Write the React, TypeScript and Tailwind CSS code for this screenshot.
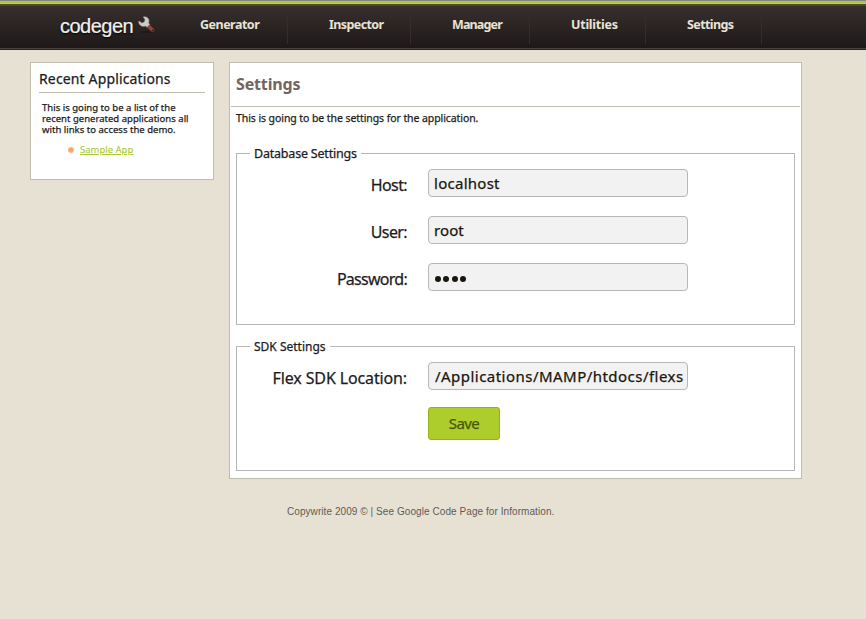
import type { ReactNode } from "react";

const navItems = [
  { label: "Generator", box: "w-[118px] pl-[30px]", text: "tracking-[-0.5px]" },
  { label: "Inspector", box: "w-[123px] pl-[41px]", text: "tracking-[-0.6px]" },
  { label: "Manager", box: "w-[119px] pl-[41px]", text: "tracking-[-0.85px]" },
  { label: "Utilities", box: "w-[116px] pl-[41px]", text: "tracking-[-0.25px]" },
  { label: "Settings", box: "w-[116px] pl-[41px]", text: "tracking-[-0.6px]" },
];

function Wrench() {
  return (
    <svg width="18" height="18" viewBox="0 0 18 18" className="mt-[10px] ml-[2px] shrink-0">
      <ellipse cx="8" cy="16" rx="6" ry="0.7" fill="#161211" opacity="0.7" />
      <path d="M10 9.8 L14.4 14" stroke="#6a3229" strokeWidth="4.4" strokeLinecap="round" />
      <path d="M10 9.6 L14.2 13.6" stroke="#97493b" strokeWidth="2.6" strokeLinecap="round" />
      <circle cx="14.6" cy="14.2" r="0.7" fill="#2a1614" />
      <path
        d="M5.2 0.9 C8.2 0.1 11 2 11 5 C11 5.8 10.8 6.4 10.5 7 L11.8 8.3 L8.8 11.1 L7.4 10 C4.4 11.3 1 9.4 0.6 6 L1 5 L3.8 7.1 L6.4 6.1 L7 3.5 Z"
        fill="#cbcbc9"
        stroke="#9d9b99"
        strokeWidth="0.5"
      />
    </svg>
  );
}

function Header() {
  return (
    <header className="h-[50px] border-t border-[#85858a] bg-[#272020]">
      <div className="h-[2px] bg-[#a9ca2c]" />
      <div className="h-px bg-[#b6d84b]" />
      <div className="h-px bg-[#4b4c32]" />
      <div className="h-px bg-[#4a4440]" />
      <div className="flex h-[42px] bg-linear-to-b from-[#382f2d] to-[#1e1919]">
        <div className="flex w-[170px] pl-[60px]">
          <span className="mt-[6px] w-[76px] font-['Liberation_Sans'] text-[20px] leading-[28px] tracking-[-0.5px] whitespace-nowrap text-[#f2f0ed] [-webkit-text-stroke:0.2px] [text-shadow:0_1px_2px_#000]">
            codegen
          </span>
          <Wrench />
        </div>
        <nav className="flex pt-[8px] [-webkit-text-stroke:0px]">
          {navItems.map((item) => (
            <a
              key={item.label}
              className={`h-[30px] border-r border-[#352d2c] text-[12.5px] leading-[21px] font-bold text-[#e9e3d6] ${item.box}`}
            >
              <span className={item.text}>{item.label}</span>
            </a>
          ))}
        </nav>
      </div>
      <div className="h-px bg-[#4a4240]" />
      <div className="h-px bg-[#292222]" />
    </header>
  );
}

function Field({ label, labelClass, children }: { label: string; labelClass: string; children: ReactNode }) {
  return (
    <div className="flex h-[28px]">
      <div className={`mr-[21px] flex w-[170px] justify-end pt-[4px] text-[16px] leading-[24px] whitespace-nowrap ${labelClass}`}>
        {label}
      </div>
      {children}
    </div>
  );
}

const inputClass =
  "h-[28px] w-[260px] rounded-[4px] border border-[#b7b7b7] bg-[#f2f2f2] text-[15px] leading-[26px] text-[#19160c] outline-none";

export default function App() {
  return (
    <div className="h-[619px] w-[866px] overflow-hidden bg-[#e7e1d4] font-['Noto_Sans',sans-serif] text-[#1c1c1c] [-webkit-text-stroke:0.25px]">
      <Header />
      <div className="flex items-start gap-[15px] pt-[12px] pl-[30px]">
        <aside className="h-[118px] w-[184px] border border-[#bfbdb0] bg-white px-[8px]">
          <h2 className="h-[30px] w-[166px] border-b border-[#bfbdb0] pt-[5px] text-[14px] leading-[21px] tracking-[0.14px] whitespace-nowrap">
            Recent Applications
          </h2>
          <p className="mt-[9px] ml-[3px] text-[9.5px] leading-[11px] tracking-[0.02px] whitespace-nowrap">
            This is going to be a list of the
            <br />
            recent generated applications all
            <br />
            with links to access the demo.
          </p>
          <div className="mt-[8px] flex items-center pl-[29px]">
            <span className="mr-[6px] size-[6px] rounded-full bg-radial from-[#f59a50] to-[#fbc79b]" />
            <a className="text-[9.5px] leading-[14px] text-[#a9c934] underline [-webkit-text-stroke:0.1px]">Sample App</a>
          </div>
        </aside>

        <main className="h-[417px] w-[573px] border border-[#bfbdb0] bg-white px-px">
          <h1 className="h-[44px] border-b border-[#bfbdb0] pt-[9px] pl-[5px] text-[16px] leading-[24px] font-bold tracking-[-0.15px] text-[#736460] [-webkit-text-stroke:0px]">
            Settings
          </h1>
          <div className="pr-[5px] pl-[5px]">
            <p className="h-[37px] pt-[3px] text-[10.5px] leading-[16px] tracking-[-0.08px]">
              This is going to be the settings for the application.
            </p>
            <fieldset className="h-[181px] w-[559px] border border-[#b7b7b7]">
              <legend className="ml-[13px] h-[19px] px-[4px] text-[12.5px] leading-[19px] tracking-[-0.2px]">Database Settings</legend>
              <div className="flex flex-col gap-[19px] pt-[6px]">
                <Field label="Host:" labelClass="tracking-[-0.6px]">
                  <input className={`${inputClass} pl-[5px] tracking-[0.27px]`} defaultValue="localhost" />
                </Field>
                <Field label="User:" labelClass="tracking-[-0.6px]">
                  <input className={`${inputClass} pl-[5px] tracking-[0.1px]`} defaultValue="root" />
                </Field>
                <Field label="Password:" labelClass="tracking-[-0.73px]">
                  <div className={`${inputClass} flex items-center gap-[2.4px] pt-[3px] pl-[6px]`}>
                    <span className="size-[6px] rounded-full bg-[#19160c]" />
                    <span className="size-[6px] rounded-full bg-[#19160c]" />
                    <span className="size-[6px] rounded-full bg-[#19160c]" />
                    <span className="size-[6px] rounded-full bg-[#19160c]" />
                  </div>
                </Field>
              </div>
            </fieldset>
            <fieldset className="mt-[12px] h-[134px] w-[559px] border border-[#b7b7b7]">
              <legend className="ml-[13px] h-[19px] px-[4px] text-[12px] leading-[19px]">SDK Settings</legend>
              <div className="pt-[6px]">
                <Field label="Flex SDK Location:" labelClass="tracking-[-0.13px]">
                  <input className={`${inputClass} pl-[6px] tracking-[0.47px]`} defaultValue="/Applications/MAMP/htdocs/flexs" />
                </Field>
                <button className="mt-[17px] ml-[191px] block h-[33px] w-[72px] rounded-[3px] border border-[#97b312] bg-[#adcd2d] text-[15px] leading-[31px] tracking-[-0.6px] text-[#485608]">
                  Save
                </button>
              </div>
            </fieldset>
          </div>
        </main>
      </div>
      <footer className="mt-[25px] pl-[287px] font-['Liberation_Sans'] text-[10px] leading-[15px] tracking-[0.07px] whitespace-nowrap text-[#5e5b56] [-webkit-text-stroke:0px]">
        Copywrite 2009 © | See Google Code Page for Information.
      </footer>
    </div>
  );
}
